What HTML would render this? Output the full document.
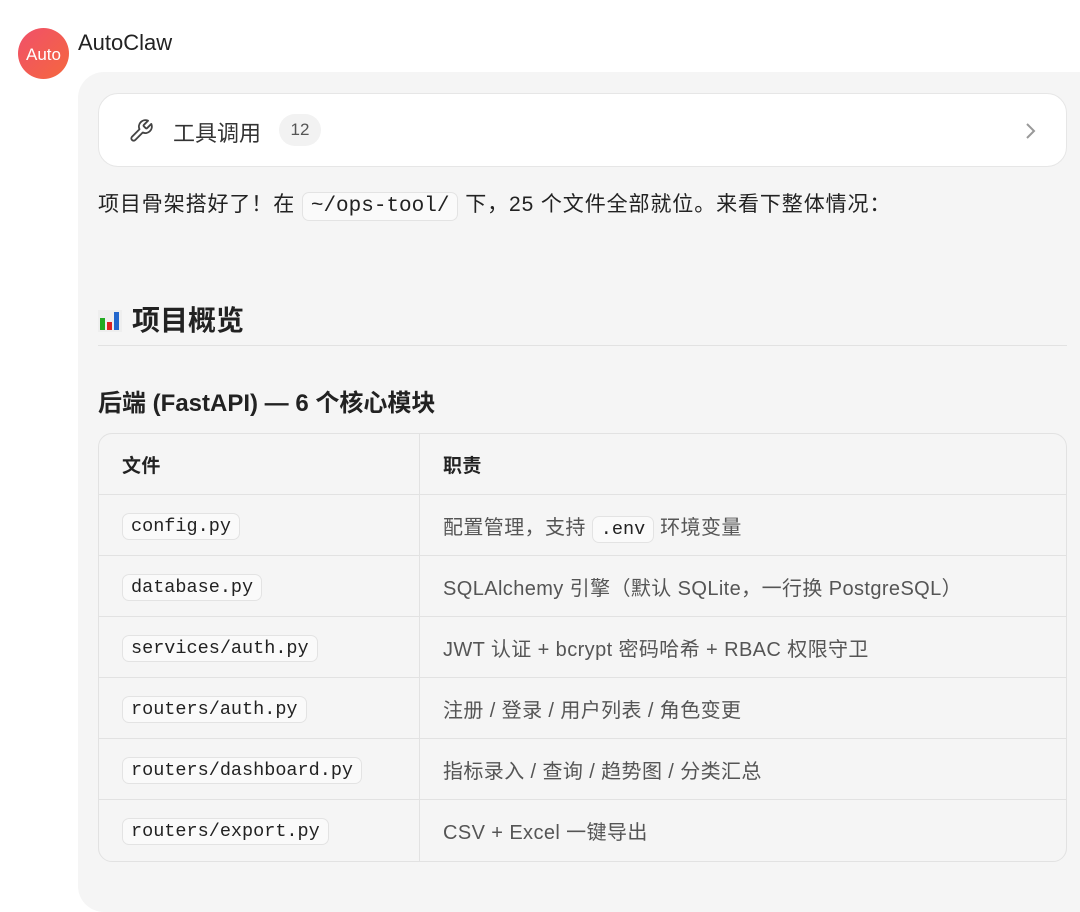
<!DOCTYPE html>
<html><head><meta charset="utf-8"><style>
*{margin:0;padding:0;box-sizing:border-box}
body{width:1080px;height:894px;background:#fff;font-family:"Liberation Sans","Noto Sans CJK SC",sans-serif;color:#222;position:relative;overflow:hidden}
.av{position:absolute;left:18px;top:28px;width:51px;height:51px;border-radius:50%;background:linear-gradient(135deg,#f0506a,#f5673e);color:#fff;font-size:17px;display:flex;align-items:center;justify-content:center;padding-top:3px}
.name{position:absolute;left:78px;top:30px;font-size:22px;color:#222}
.card{position:absolute;left:78px;top:72px;width:1030px;height:840px;background:#f5f5f5;border-radius:26px}
.tool{position:absolute;left:98px;top:93px;width:969px;height:74px;background:#fff;border:1px solid #e6e6e6;border-radius:20px}
.tool .t{position:absolute;left:74px;top:22px;font-size:22px;color:#333}
.badge{position:absolute;left:180px;top:20px;width:42px;height:32px;border-radius:16px;background:#f2f2f2;font-size:17px;color:#555;text-align:center;line-height:32px}
.p{position:absolute;left:98px;top:188px;font-size:21px;color:#222;letter-spacing:0.9px}
code{font-family:"Liberation Mono","Noto Sans CJK SC",monospace;background:#fafafa;border:1px solid #e3e3e3;border-radius:7px;padding:2px 8px;font-size:21px;color:#222;letter-spacing:0}
.hr{position:absolute;left:98px;top:345px;width:969px;height:1px;background:#e2e2e2}
.h2{position:absolute;left:98px;top:299px;font-size:28px;font-weight:bold}
.h3{position:absolute;left:98px;top:383px;font-size:24px;font-weight:bold}
table{position:absolute;left:98px;top:433px;width:969px;border-collapse:separate;border-spacing:0;border:1px solid #e2e2e2;border-radius:14px;overflow:hidden}
td,th{height:61px;border-bottom:1px solid #e2e2e2;padding-left:23px;text-align:left;font-size:20px;color:#555;font-weight:normal;letter-spacing:0.4px}
th{font-weight:bold;color:#222;font-size:19px}
tr:last-child td{border-bottom:none}
td:first-child,th:first-child{width:321px;border-right:1px solid #e2e2e2}
td code{font-size:18.5px}
</style></head><body>
<div class="av">Auto</div>
<div class="name">AutoClaw</div>
<div class="card"></div>
<div class="tool">
<svg style="position:absolute;left:29px;top:24px" width="26" height="26" viewBox="0 0 24 24" fill="none" stroke="#444" stroke-width="1.7" stroke-linejoin="round"><path d="M14.7 6.3a1 1 0 0 0 0 1.4l1.6 1.6a1 1 0 0 0 1.4 0l3.8-3.8a6 6 0 0 1-7.9 7.9l-6.9 6.9a2.1 2.1 0 0 1-3-3l6.9-6.9a6 6 0 0 1 7.9-7.9z"/></svg>
<div class="t">工具调用</div><div class="badge">12</div>
<svg style="position:absolute;right:30px;top:28px" width="12" height="18" viewBox="0 0 12 18" fill="none" stroke="#999" stroke-width="2"><path d="M3 2l7 7-7 7"/></svg>
</div>
<div class="p">项目骨架搭好了！在 <code>~/ops-tool/</code> 下，25 个文件全部就位。来看下整体情况：</div>
<div class="h2"><span style="display:inline-block;width:24px;height:22px;vertical-align:-2px;background:#eee;position:relative;margin-right:10px"><i style="position:absolute;left:2px;bottom:2px;width:5px;height:12px;background:#2a2"></i><i style="position:absolute;left:9px;bottom:2px;width:5px;height:8px;background:#d22"></i><i style="position:absolute;left:16px;bottom:2px;width:5px;height:18px;background:#26c"></i></span>项目概览</div>
<div class="hr"></div>
<div class="h3">后端 (FastAPI) — 6 个核心模块</div>
<table>
<tr><th>文件</th><th>职责</th></tr>
<tr><td><code>config.py</code></td><td>配置管理，支持 <code>.env</code> 环境变量</td></tr>
<tr><td><code>database.py</code></td><td>SQLAlchemy 引擎（默认 SQLite，一行换 PostgreSQL）</td></tr>
<tr><td><code>services/auth.py</code></td><td>JWT 认证 + bcrypt 密码哈希 + RBAC 权限守卫</td></tr>
<tr><td><code>routers/auth.py</code></td><td>注册 / 登录 / 用户列表 / 角色变更</td></tr>
<tr><td><code>routers/dashboard.py</code></td><td>指标录入 / 查询 / 趋势图 / 分类汇总</td></tr>
<tr><td><code>routers/export.py</code></td><td>CSV + Excel 一键导出</td></tr>
</table>
</body></html>
